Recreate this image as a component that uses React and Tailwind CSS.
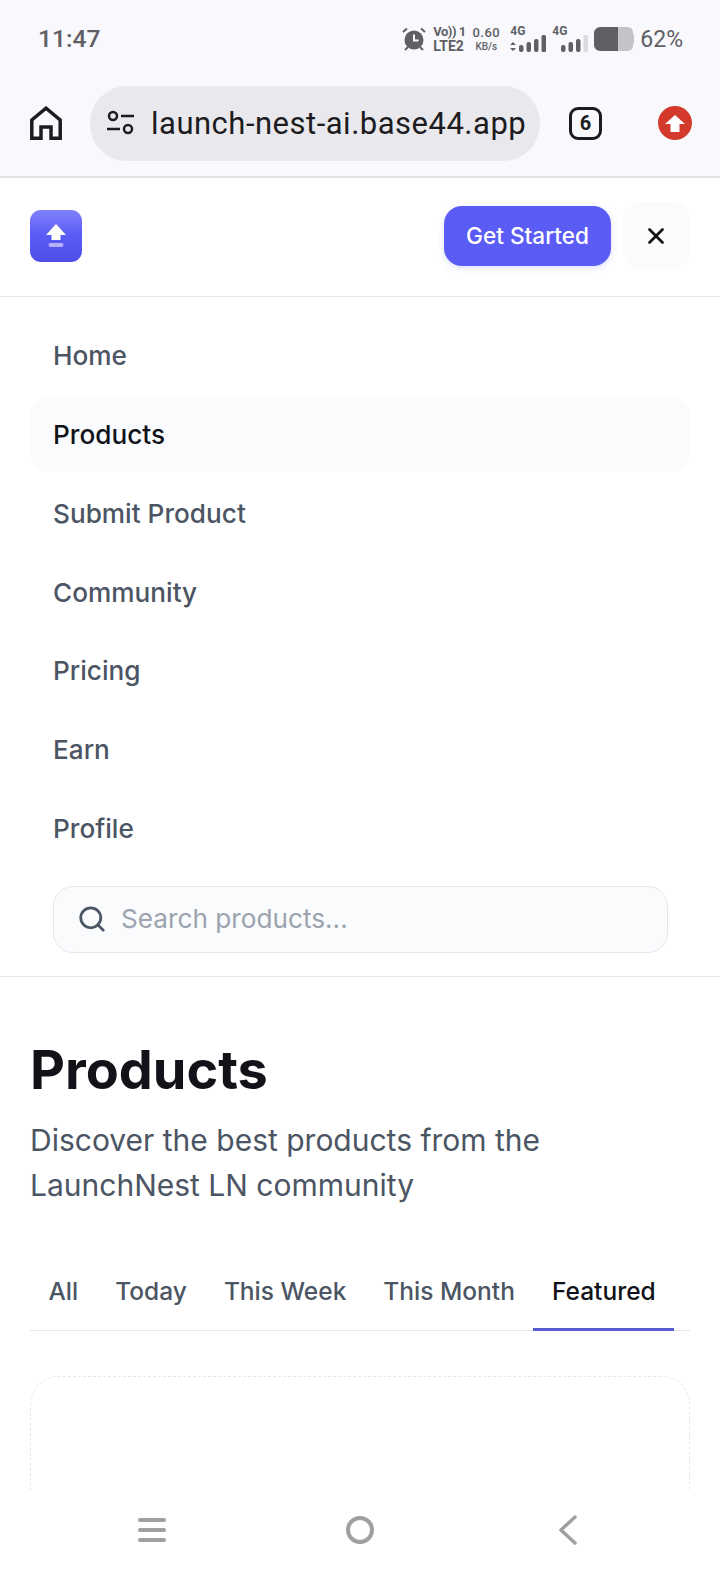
import React from "react";
import { X, Search } from "lucide-react";

const Bars = ({ dim }) => (
  <svg width="27" height="18" viewBox="0 0 27 18">
    <rect x="0" y="11" width="4.500" height="7" rx="2" fill="#5f5f64" />
    <rect x="7.500" y="8" width="4.500" height="10" rx="2" fill="#5f5f64" />
    <rect x="15" y="5" width="4.500" height="13" rx="2" fill="#5f5f64" />
    <rect x="22.500" y="1" width="4.500" height="17" rx="1.500" fill={dim ? "#dcdce0" : "#5f5f64"} />
  </svg>
);

const navItems = ["Home", "Products", "Submit Product", "Community", "Pricing", "Earn", "Profile"];
const tabs = ["All", "Today", "This Week", "This Month", "Featured"];

export default function App() {
  return (
    <div className="w-[720px] h-[1570px] bg-white flex flex-col overflow-hidden font-['Inter',sans-serif]">
      {/* browser chrome */}
      <div className="bg-[#f8f8fd] h-[178px] border-b-2 border-[#e2e2e6] shrink-0 flex flex-col">
        <div className="h-[86px] pl-[38px] pr-[37px] flex items-center justify-between font-['Roboto',sans-serif] text-[#5f5f64]">
          <span className="text-[24.600px] font-medium leading-none mt-[-8px]">11:47</span>
          <div className="flex items-center mt-[-8px]">
            <svg width="24" height="26" viewBox="0 0 24 26" className="mr-[7px]">
              <circle cx="12" cy="14" r="9.500" fill="#5f5f64" />
              <path d="M12 8.500v6h4.500" stroke="#f8f8fd" strokeWidth="2" fill="none" />
              <path d="M1 6l4-3.500M23 6l-4-3.500M3 24l3-3M21 24l-3-3" stroke="#5f5f64" strokeWidth="2" />
            </svg>
            <div className="flex flex-col items-start w-[30px] font-bold leading-[14px] mr-[9px]">
              <span className="text-[13px] whitespace-nowrap tracking-[-0.5px] leading-[14px]">Vo)) 1</span>
              <span className="text-[14px] whitespace-nowrap leading-[15px]">LTE2</span>
            </div>
            <div className="flex flex-col items-center w-[28px] mr-[10px]">
              <span className="text-[13px] font-medium leading-[15px] tracking-[0.5px]">0.60</span>
              <span className="text-[10px] font-medium leading-[13px]">KB/s</span>
            </div>
            <div className="relative w-[36px] h-[26px] mr-[6px]">
              <span className="absolute left-0 top-[-1px] text-[12px] font-bold leading-[13px]">4G</span>
              <svg width="6" height="9" viewBox="0 0 6 9" className="absolute left-0 bottom-[1px]">
                <path d="M3 0l3 3H0zM3 9L0 6h6z" fill="#5f5f64" />
              </svg>
              <div className="absolute right-0 bottom-0"><Bars /></div>
            </div>
            <div className="relative w-[36px] h-[26px] mr-[6px]">
              <span className="absolute left-0 top-[-1px] text-[12px] font-bold leading-[13px]">4G</span>
              <div className="absolute right-0 bottom-0"><Bars dim /></div>
            </div>
            <svg width="40" height="24" viewBox="0 0 40 24" className="mr-[6px]">
              <path d="M7 0h26c4 0 6 3 6 5v1l1 2v8l-1 2v1c0 2-2 5-6 5H7c-4 0-7-3-7-6V6c0-3 3-6 7-6z" fill="#c4c4c8" />
              <path d="M7 0h17v24H7c-4 0-7-3-7-6V6c0-3 3-6 7-6z" fill="#5f5f64" />
            </svg>
            <span className="text-[23px] leading-none">62%</span>
          </div>
        </div>
        <div className="flex items-center h-[74px]">
          <svg width="32" height="34" viewBox="0 0 32 34" className="ml-[30px] mr-[28px]" fill="none" stroke="#1c1c20" strokeWidth="3.500">
            <path d="M1.800 32.200V14L16 2.200l14.200 11.800v18.200H21V21H11v11.200z" />
          </svg>
          <div className="w-[450px] h-[75px] bg-[#e8e8ed] rounded-[37px] flex items-center pl-[16px] overflow-hidden">
            <svg width="30" height="26" viewBox="0 0 30 26" fill="none" stroke="#1c1c20" strokeWidth="2.500" className="shrink-0">
              <circle cx="7" cy="6" r="4" />
              <path d="M15 6h13" />
              <circle cx="22" cy="19" r="4" />
              <path d="M1 19h13" />
            </svg>
            <span className="ml-[15px] pt-[3px] text-[#1c1c20] text-[31px] font-['Roboto',sans-serif] whitespace-nowrap tracking-[0.5px]">launch-nest-ai.base44.app</span>
          </div>
          <div className="ml-[29px] w-[33px] h-[33px] border-[3px] border-[#1c1c20] rounded-[9px] flex items-center justify-center text-[#1c1c20] text-[20px] font-bold font-['Roboto',sans-serif] leading-none">6</div>
          <div className="ml-[56px] w-[34px] h-[34px] rounded-full bg-[#d33a2c] flex items-center justify-center">
            <svg width="20" height="17" viewBox="0 0 20 17"><path d="M10 0l10 9h-5.500v8h-9V9H0z" fill="#fff" /></svg>
          </div>
        </div>
      </div>

      {/* mobile site header */}
      <div className="h-[119px] shrink-0 border-b border-[#e5e7eb] flex items-center justify-between pl-[30px] pr-[30px]">
        <div className="w-[52px] h-[52px] rounded-[11px] bg-gradient-to-b from-[#8180fb] via-[#5a5af5] to-[#4f4ee8] flex items-center justify-center mt-[-2px]">
          <svg width="20" height="24" viewBox="0 0 20 24">
            <path d="M10 0l10 11h-5.500v5h-9v-5H0z" fill="#fff" />
            <rect x="2.500" y="19" width="15" height="4" rx="2" fill="#b4b3fa" />
          </svg>
        </div>
        <div className="flex items-center gap-[12px] mt-[-3px]">
          <button className="w-[167px] h-[60px] rounded-[18px] bg-[#5b5bf6] text-white text-[22.600px] font-medium leading-[58px] shadow-[0_2px_6px_rgba(91,91,246,0.2)]">Get Started</button>
          <div className="w-[67px] h-[67px] rounded-[18px] bg-[#fafbfd] flex items-center justify-center pr-[2px]">
            <X size={26} color="#111" strokeWidth={2.400} />
          </div>
        </div>
      </div>

      {/* menu */}
      <div className="h-[680px] shrink-0 border-b border-[#e5e7eb] px-[30px] pt-[21.500px] flex flex-col">
        <div className="flex flex-col gap-[4px]">
          {navItems.map((n) => (
            <div key={n} className={"h-[74.800px] px-[23px] flex items-center rounded-[20px] text-[26.200px] font-medium " + (n === "Products" ? "bg-[#fafbfd] text-[#111318]" : "text-[#4b5563]")}>{n}</div>
          ))}
        </div>
        <div className="ml-[23px] mr-[22px] mt-[19.500px] h-[67px] rounded-[20px] border border-[#e5e7eb] bg-[#fafbfd] flex items-center pl-[23px]">
          <Search size={30} color="#4b5563" strokeWidth={2.200} />
          <span className="ml-[14px] text-[26.200px] text-[#9ca3af]">Search products...</span>
        </div>
      </div>

      {/* content */}
      <div className="flex-1 min-h-0 overflow-hidden px-[30px] pt-[57px]">
        <h1 className="text-[54px] font-bold text-[#111318] leading-[72px]">Products</h1>
        <p className="mt-[12px] text-[30px] text-[#4b5563] leading-[45px] w-[560px]">Discover the best products from the LaunchNest LN community</p>
        <div className="mt-[43px] border-b border-[#e5e7eb] flex h-[80px] text-[24.500px] font-medium">
          {tabs.map((t) => (
            <div key={t} className={"px-[18.500px] h-[80px] pt-[3px] flex items-center whitespace-nowrap border-b-[3px] " + (t === "Featured" ? "text-[#111318] border-[#5b5bd6]" : "text-[#4b5563] border-transparent")}>{t}</div>
          ))}
        </div>
        <div className="mt-[45px] h-[300px] rounded-[28px] border border-dashed border-[#e5e7eb]" />
      </div>

      {/* android nav */}
      <div className="h-[80px] shrink-0 bg-white relative">
        <div className="absolute left-[138px] top-[28px] w-[28px] flex flex-col gap-[6px]">
          <div className="h-[4px] rounded bg-[#a0a0a0]" />
          <div className="h-[4px] rounded bg-[#a0a0a0]" />
          <div className="h-[4px] rounded bg-[#a0a0a0]" />
        </div>
        <div className="absolute left-[346px] top-[26px] w-[28px] h-[28px] rounded-full border-[4px] border-[#a0a0a0]" />
        <svg width="22" height="30" viewBox="0 0 22 30" className="absolute left-[557px] top-[25px]" fill="none" stroke="#a0a0a0" strokeWidth="3.500" strokeLinecap="round" strokeLinejoin="round">
          <path d="M18 2L4 15l14 13" />
        </svg>
      </div>
    </div>
  );
}
